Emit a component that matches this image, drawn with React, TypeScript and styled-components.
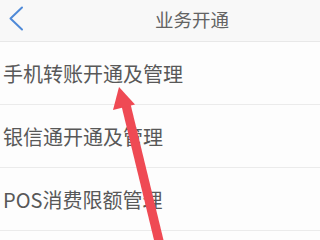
import React from "react";
import styled, { createGlobalStyle } from "styled-components";

const Global = createGlobalStyle`
  html, body { margin: 0; padding: 0; background: #fdfdfd; }
  body { font-family: "Noto Sans CJK SC", "Noto Sans", sans-serif; }
`;

const Screen = styled.div`
  position: relative;
  width: 320px;
  height: 240px;
  overflow: hidden;
  background: #fdfdfd;
`;

const Header = styled.header`
  display: grid;
  grid-template-columns: 155px 1fr;
  align-items: center;
  height: 41px;
  background: #f8f8f8;
  border-bottom: 1px solid #e8e8e8;
`;

const BackButton = styled.div`
  display: flex;
  align-items: center;
  padding-left: 8px;
  height: 100%;
  margin-top: -5px;
`;

const Title = styled.h1`
  margin: 0;
  font-size: 18.5px;
  font-weight: 400;
  color: #636363;
  line-height: 1;
  margin-top: -2px;
  letter-spacing: 0;
`;

const List = styled.div`
  display: flex;
  flex-direction: column;
`;

const Row = styled.div`
  display: flex;
  align-items: center;
  height: 63px;
  padding-left: 3px;
  padding-top: 2px;
  box-sizing: border-box;
  border-bottom: 1px solid #ebebeb;
  font-size: 20px;
  color: #585858;
  line-height: 1;
`;

const ArrowOverlay = styled.svg`
  position: absolute;
  left: 0;
  top: 0;
  pointer-events: none;
`;

const items = ["手机转账开通及管理", "银信通开通及管理", "POS消费限额管理"];

export default function App() {
  return (
    <>
      <Global />
      <Screen>
        <Header>
          <BackButton>
            <svg width="18" height="26" viewBox="0 0 18 26">
              <path
                d="M14 2.5 L2.5 13.5 L14 24.5"
                fill="none"
                stroke="#4f8ad8"
                strokeWidth="2"
                strokeLinecap="round"
                strokeLinejoin="round"
              />
            </svg>
          </BackButton>
          <Title>业务开通</Title>
        </Header>
        <List>
          {items.map((t) => (
            <Row key={t}>{t}</Row>
          ))}
        </List>
        <ArrowOverlay width="320" height="240" viewBox="0 0 320 240">
          <path
            d="M121.5 106 L154.5 242 L163.5 240 L130.5 104 Z"
            fill="#ef4a54"
          />
          <path
            d="M119 87 L135 104.5 L113 110 Z"
            fill="#ef4a54"
          />
        </ArrowOverlay>
      </Screen>
    </>
  );
}
